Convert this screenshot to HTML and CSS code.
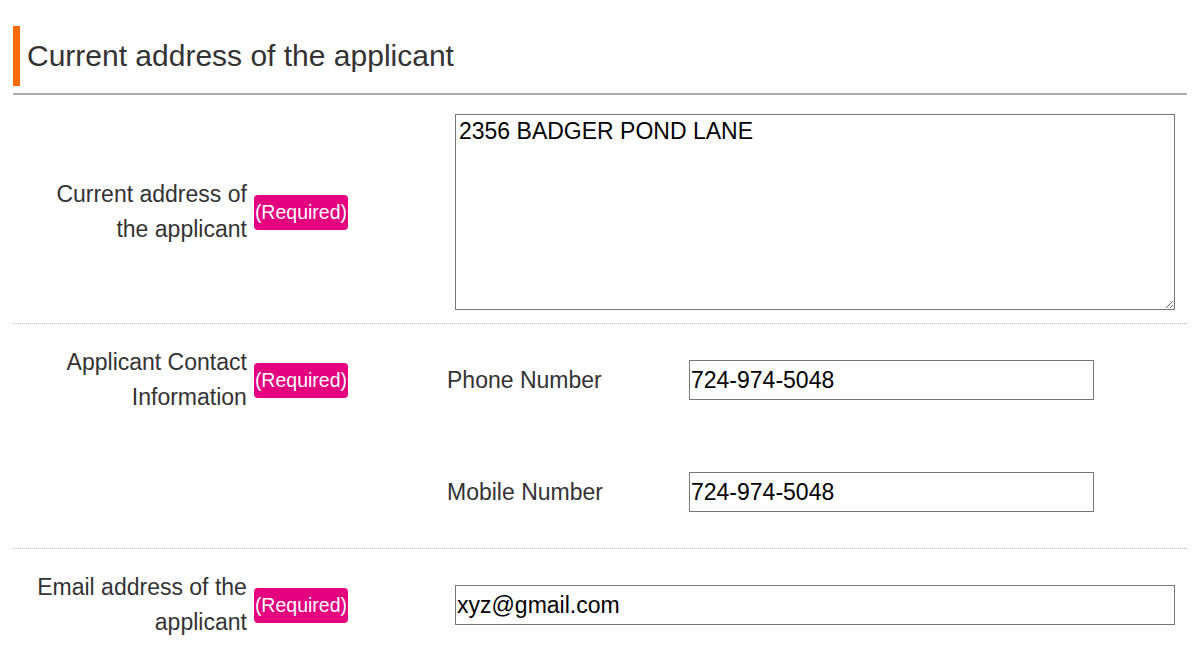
FILE: index.html
```html
<!DOCTYPE html>
<html>
<head>
	<meta name="viewport" content="width=device-width, initial-scale=1.0">
	<title>Applicant address</title>
	<link rel="stylesheet" href="styles.css">
</head>
<body>

	<div id="container">

		<div class="sectionHead">
			<h2 class="sectionTitle">Current address of the applicant</h2>
		</div>

		<div class="formRow rowAddress">
			<div class="labelCell">
				<span class="labelText">Current address of<br>the applicant</span>
				<span class="required">(Required)</span>
			</div>
			<div class="valueCell">
				<textarea class="addressBox">2356 BADGER POND LANE</textarea>
			</div>
		</div>

		<div class="formRow rowContact">
			<div class="labelCell">
				<span class="labelText">Applicant Contact<br>Information</span>
				<span class="required">(Required)</span>
			</div>
			<div class="valueCell contactCell">
				<div class="subRow">
					<span class="subLabel">Phone Number</span>
					<input class="textField phoneField" type="text" value="724-974-5048">
				</div>
				<div class="subRow">
					<span class="subLabel">Mobile Number</span>
					<input class="textField phoneField" type="text" value="724-974-5048">
				</div>
			</div>
		</div>

		<div class="formRow rowEmail">
			<div class="labelCell">
				<span class="labelText">Email address of the<br>applicant</span>
				<span class="required">(Required)</span>
			</div>
			<div class="valueCell">
				<input class="textField emailField" type="text" value="xyz@gmail.com">
			</div>
		</div>

	</div>

</body>
</html>
```

FILE: styles.css
```css
		body{
			margin: 0;
			font-family: "Liberation Sans", Arial, sans-serif;
			color: #333;
			background: #fff;
		}

		#container{
			padding: 26px 13px 0 13px;
		}

		.sectionHead{
			padding-bottom: 7px;
			border-bottom: 2px solid #aaa;
		}

		.sectionTitle{
			margin: 0;
			height: 60px;
			border-left: 7px solid #ff6a00;
			padding-left: 7px;
			font-size: 30px;
			font-weight: normal;
			line-height: 60px;
			color: #333;
		}

		.formRow{
			display: grid;
			grid-template-columns: 335px 1fr;
			border-bottom: 1px dotted #c4c4c4;
		}

		.rowAddress{
			align-items: center;
			padding: 19px 0 13px 0;
		}

		.rowContact{
			align-items: start;
			padding: 36px 0;
		}

		.rowEmail{
			align-items: center;
			padding: 21px 0 0 0;
			border-bottom: none;
		}

		.labelCell{
			display: flex;
			align-items: center;
			justify-content: flex-end;
		}

		.rowContact .labelCell{
			margin-top: -15px;
		}

		.labelText{
			font-size: 23px;
			line-height: 35px;
			text-align: right;
		}

		.required{
			margin-left: 7px;
			background-color: #e4007f;
			color: #fff;
			font-size: 19.5px;
			line-height: 35px;
			padding: 0 1px;
			border-radius: 4px;
		}

		.valueCell{
			padding-left: 107px;
			padding-right: 12px;
		}

		.addressBox{
			display: block;
			box-sizing: border-box;
			width: 720px;
			height: 196px;
			margin: 0;
			padding: 3px 3px;
			border: 1px solid #767676;
			font-family: "Liberation Sans", Arial, sans-serif;
			font-size: 23px;
			color: #000;
		}

		.contactCell{
			padding-left: 99px;
			display: flex;
			flex-direction: column;
			gap: 72px;
		}

		.subRow{
			display: flex;
			align-items: center;
		}

		.subLabel{
			width: 242px;
			font-size: 23px;
		}

		.textField{
			display: block;
			box-sizing: border-box;
			height: 40px;
			margin: 0;
			padding: 1px 1px;
			border: 1px solid #767676;
			font-family: "Liberation Sans", Arial, sans-serif;
			font-size: 23px;
			color: #000;
		}

		.phoneField{
			width: 405px;
		}

		.emailField{
			width: 720px;
		}
```
